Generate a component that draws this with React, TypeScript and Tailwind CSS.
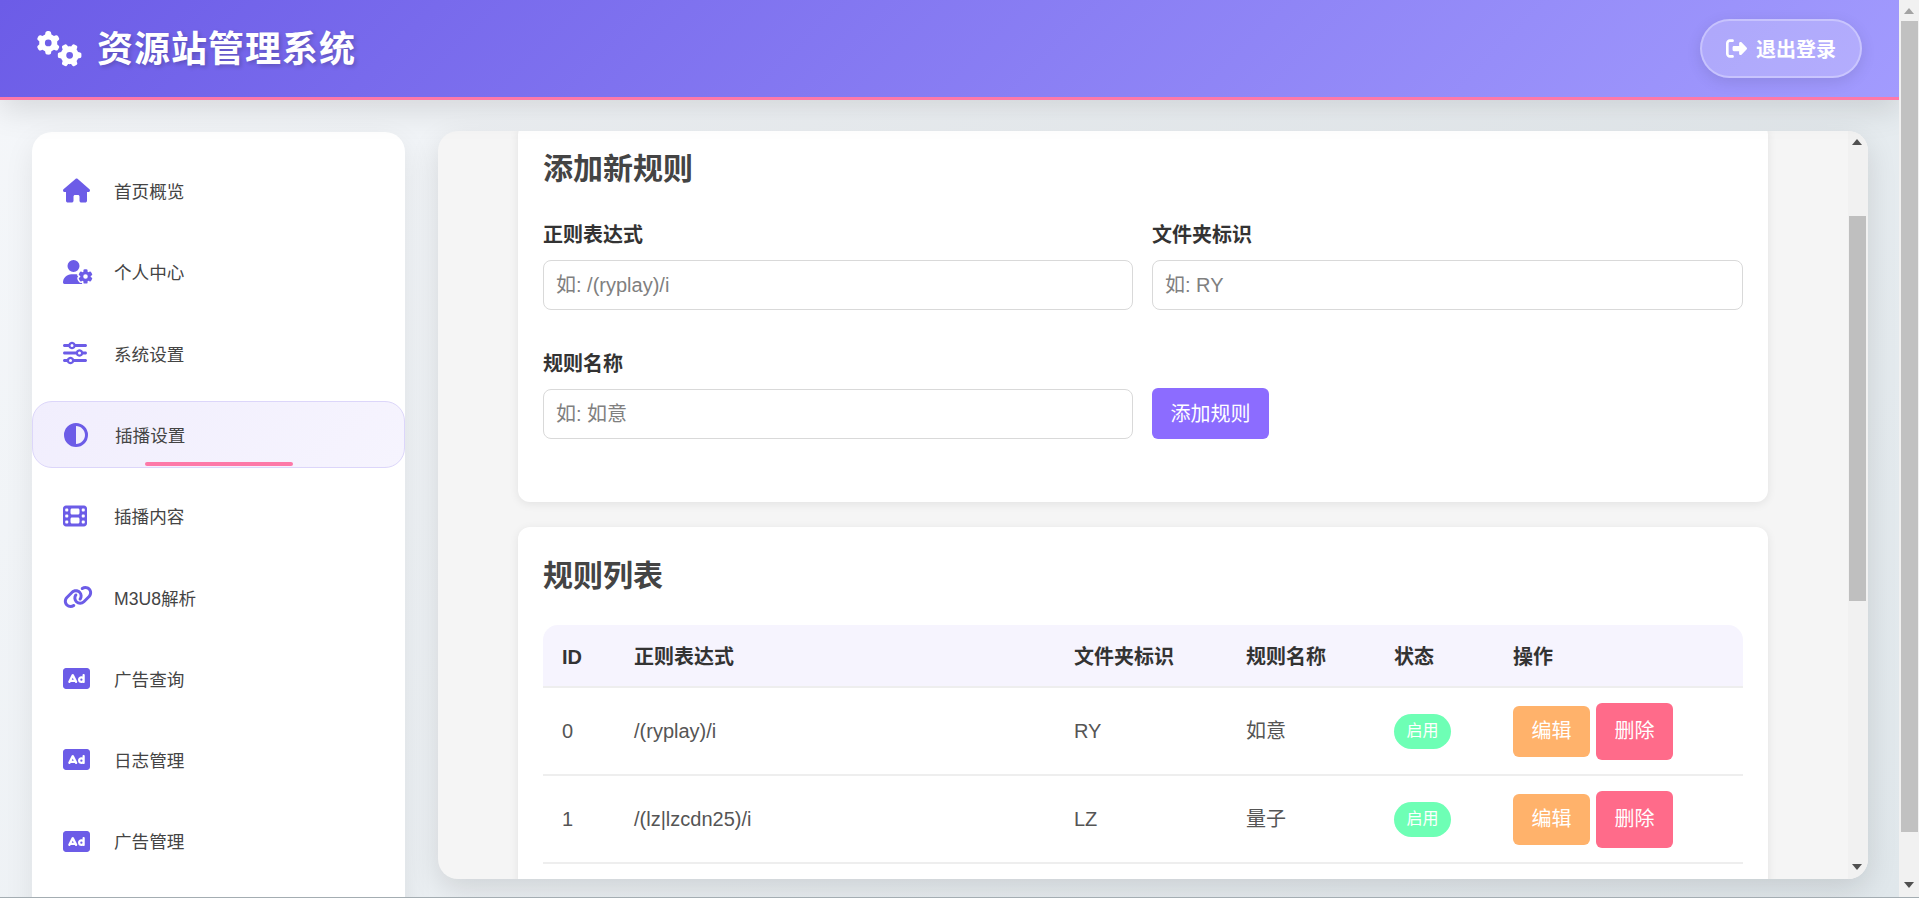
import {
  FaGears,
  FaHouse,
  FaUserGear,
  FaSliders,
  FaCircleHalfStroke,
  FaFilm,
  FaLink,
  FaRectangleAd,
  FaRightFromBracket,
} from 'react-icons/fa6';

const navItems = [
  { label: '首页概览', icon: FaHouse, size: 27 },
  { label: '个人中心', icon: FaUserGear, size: 30 },
  { label: '系统设置', icon: FaSliders, size: 24 },
  { label: '插播设置', icon: FaCircleHalfStroke, size: 24, active: true },
  { label: '插播内容', icon: FaFilm, size: 24 },
  { label: 'M3U8解析', icon: FaLink, size: 30 },
  { label: '广告查询', icon: FaRectangleAd, size: 27 },
  { label: '日志管理', icon: FaRectangleAd, size: 27 },
  { label: '广告管理', icon: FaRectangleAd, size: 27 },
];

const rules = [
  { id: 0, regex: '/(ryplay)/i', folder: 'RY', name: '如意' },
  { id: 1, regex: '/(lz|lzcdn25)/i', folder: 'LZ', name: '量子' },
];

function Arrow({ up, className }: { up?: boolean; className: string }) {
  return (
    <svg width="10" height="6" viewBox="0 0 10 6" className={className}>
      <path d={up ? 'M5 0L10 6H0Z' : 'M0 0H10L5 6Z'} fill="currentColor" />
    </svg>
  );
}

function Sidebar() {
  return (
    <aside className="mt-px h-[800px] w-[373px] shrink-0 rounded-[20px] bg-white py-[25px] shadow-[0_10px_30px_rgba(0,0,0,0.08)]">
      <nav className="flex flex-col gap-[13.7px]">
        {navItems.map((item) => {
          const Icon = item.icon;
          return (
            <div
              key={item.label}
              className={
                item.active
                  ? 'relative flex h-[67.6px] items-center rounded-[20px] border border-[#dcd6fa] bg-[linear-gradient(135deg,#f1eefd,#f6f4fe)] pl-[31px] text-[#444]'
                  : 'flex h-[67.6px] items-center pl-[31px] text-[#444]'
              }
            >
              <span className="flex w-[30px] text-[#6c5ce7]">
                <Icon size={item.size} />
              </span>
              <span className="mt-[3px] ml-[21px] text-[17.6px]">{item.label}</span>
              {item.active && (
                <span className="absolute bottom-[1px] left-[112px] h-[4px] w-[148px] rounded-[2px] bg-[#fd79a8]" />
              )}
            </div>
          );
        })}
      </nav>
    </aside>
  );
}

function Field({ label, placeholder }: { label: string; placeholder: string }) {
  return (
    <div className="flex flex-col">
      <label className="mb-[10px] text-[20px] leading-[30px] font-bold text-[#333]">{label}</label>
      <input
        placeholder={placeholder}
        className="h-[50px] rounded-[8px] border border-[#d9d9d9] bg-white px-[12px] text-[20px] placeholder:text-[#808080]"
      />
    </div>
  );
}

function RuleTable() {
  return (
    <table className="w-full table-fixed border-collapse text-left text-[20px] text-[#555]">
      <colgroup>
        <col className="w-[72px]" />
        <col className="w-[440px]" />
        <col className="w-[172px]" />
        <col className="w-[148px]" />
        <col className="w-[119px]" />
        <col />
      </colgroup>
      <thead>
        <tr className="h-[62px] border-b-2 border-[#eee] text-[#333]">
          <th className="rounded-tl-[15px] bg-[#f6f4fe] pt-[3px] pl-[19px] font-bold">ID</th>
          <th className="bg-[#f6f4fe] pt-[3px] pl-[19px] font-bold">正则表达式</th>
          <th className="bg-[#f6f4fe] pt-[3px] pl-[19px] font-bold">文件夹标识</th>
          <th className="bg-[#f6f4fe] pt-[3px] pl-[19px] font-bold">规则名称</th>
          <th className="bg-[#f6f4fe] pt-[3px] pl-[19px] font-bold">状态</th>
          <th className="rounded-tr-[15px] bg-[#f6f4fe] pt-[3px] pl-[19px] font-bold">操作</th>
        </tr>
      </thead>
      <tbody>
        {rules.map((rule) => (
          <tr key={rule.id} className="h-[88px] border-b-2 border-[#eee]">
            <td className="pl-[19px]">{rule.id}</td>
            <td className="pl-[19px]">{rule.regex}</td>
            <td className="pl-[19px]">{rule.folder}</td>
            <td className="pl-[19px]">{rule.name}</td>
            <td className="pl-[19px]">
              <span className="inline-flex h-[35px] w-[57px] items-center justify-center rounded-[18px] bg-[#6effb5] text-[16px] text-white">
                启用
              </span>
            </td>
            <td className="pl-[19px]">
              <div className="flex items-center gap-[6px]">
                <button className="h-[51px] w-[77px] rounded-[6px] bg-[#ffb26b] text-[20px] text-white">编辑</button>
                <button className="h-[57px] w-[77px] rounded-[6px] bg-[#ff6b8a] text-[20px] text-white">删除</button>
              </div>
            </td>
          </tr>
        ))}
      </tbody>
    </table>
  );
}

export default function App() {
  return (
    <div className="relative flex h-[898px] overflow-hidden font-['Liberation_Sans','Noto_Sans_CJK_SC',sans-serif]">
      <div className="flex min-w-0 flex-1 flex-col overflow-hidden bg-[linear-gradient(135deg,#f5f7fa,#e0e7eb)]">
        <header className="relative z-10 flex h-[100px] shrink-0 items-center justify-between border-b-[3px] border-[#fd79a8] bg-[linear-gradient(135deg,#6c5ce7,#a29bfe)] pr-[37px] pl-[37px] shadow-[0_10px_30px_rgba(0,0,0,0.12)]">
          <div className="flex items-center text-white">
            <FaGears size={45} />
            <h1 className="mt-[3px] ml-[15px] text-[36px] font-bold tracking-[1px] [text-shadow:2px_2px_4px_rgba(0,0,0,0.2)]">
              资源站管理系统
            </h1>
          </div>
          <button className="flex h-[59px] w-[162px] items-center justify-center gap-[9px] rounded-[30px] border-2 border-white/30 bg-white/20 text-[20px] font-bold text-white shadow-[0_4px_15px_rgba(0,0,0,0.1)]">
            <FaRightFromBracket size={21} />
            <span className="mt-[2px]">退出登录</span>
          </button>
        </header>

        <div className="flex min-h-0 flex-1 gap-[33px] pt-[31px] pr-[31px] pl-[32px]">
          <Sidebar />
          <main className="flex h-[748px] min-w-0 flex-1 overflow-hidden rounded-[20px] bg-[#f5f5f5] shadow-[0_10px_30px_rgba(0,0,0,0.12)]">
            <div className="min-w-0 flex-1 overflow-hidden">
              <div className="mx-auto flex w-[1250px] flex-col gap-[25px]">
                <section className="-mt-[8px] rounded-[12px] bg-white px-[25px] pt-[25px] pb-[63px] shadow-[0_2px_10px_rgba(0,0,0,0.08)]">
                  <h2 className="mb-[30px] text-[30px] leading-[42px] font-bold text-[#444]">添加新规则</h2>
                  <div className="grid grid-cols-[590px_591px] gap-x-[19px] gap-y-[39px]">
                    <Field label="正则表达式" placeholder="如: /(ryplay)/i" />
                    <Field label="文件夹标识" placeholder="如: RY" />
                    <Field label="规则名称" placeholder="如: 如意" />
                    <div className="flex items-end">
                      <button className="h-[51px] w-[117px] rounded-[6px] bg-[#8c6cff] text-[20px] text-white">添加规则</button>
                    </div>
                  </div>
                </section>
                <section className="rounded-[12px] bg-white px-[25px] pt-[28px] pb-[60px] shadow-[0_2px_10px_rgba(0,0,0,0.08)]">
                  <h2 className="mb-[28px] text-[30px] leading-[42px] font-bold text-[#444]">规则列表</h2>
                  <RuleTable />
                </section>
              </div>
            </div>
            <div className="flex w-[20px] shrink-0 flex-col bg-[#f1f1f1] pl-px">
              <div className="flex h-[85px] justify-center pt-[8px] pr-[3px]">
                <Arrow up className="text-[#505050]" />
              </div>
              <div className="h-[385px] w-[17px] bg-[#bfbfbf]" />
              <div className="mt-auto flex justify-center pr-[3px] pb-[9px]">
                <Arrow className="text-[#505050]" />
              </div>
            </div>
          </main>
        </div>
      </div>

      <div className="flex w-[20px] shrink-0 flex-col bg-[#f1f1f1] pl-[2px]">
        <div className="flex h-[21px] justify-center pt-[8px] pr-[2px]">
          <Arrow up className="text-[#a3a3a3]" />
        </div>
        <div className="h-[811px] w-[17px] bg-[#c1c1c1]" />
        <div className="mt-auto flex justify-center pr-[2px] pb-[10px]">
          <Arrow className="text-[#505050]" />
        </div>
      </div>

      <div className="absolute inset-x-0 bottom-0 h-px bg-[#a4adb2]" />
    </div>
  );
}
